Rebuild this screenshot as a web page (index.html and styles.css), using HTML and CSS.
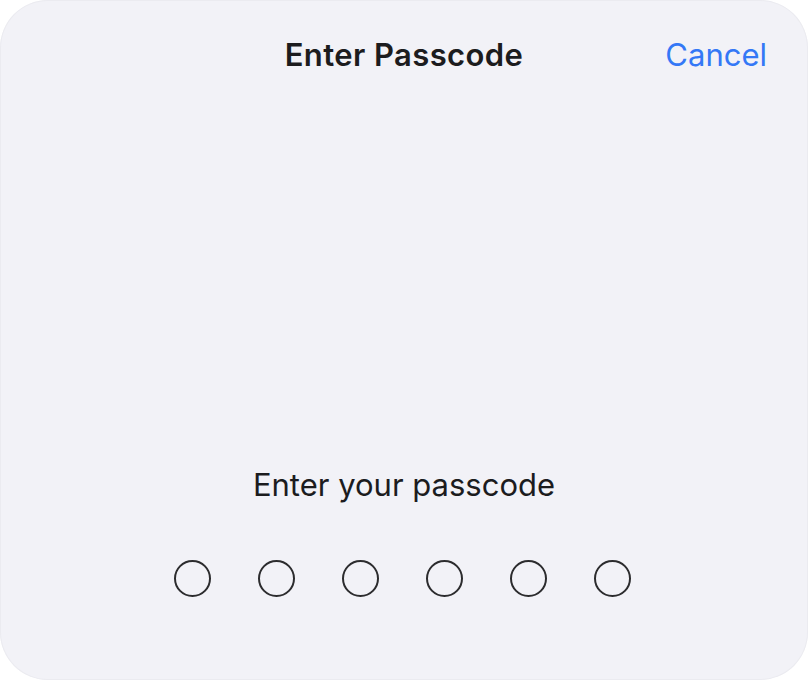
FILE: index.html
```html
<!DOCTYPE html>
<html lang="en">
<head>
<meta charset="utf-8">
<title>Enter Passcode</title>
<link rel="stylesheet" href="styles.css">
</head>
<body>
<div class="sheet">
  <header class="nav">
    <span class="nav-spacer"></span>
    <h1 class="nav-title">Enter Passcode</h1>
    <button class="nav-cancel" type="button">Cancel</button>
  </header>
  <main class="content">
    <p class="prompt">Enter your passcode</p>
    <div class="dots">
      <span class="dot"></span>
      <span class="dot"></span>
      <span class="dot"></span>
      <span class="dot"></span>
      <span class="dot"></span>
      <span class="dot"></span>
    </div>
  </main>
</div>
</body>
</html>
```
FILE: styles.css
```css
* { box-sizing: border-box; }
html, body {
  margin: 0;
  padding: 0;
  background: #ffffff;
}
body {
  font-family: Inter, "Noto Sans", "Liberation Sans", sans-serif;
  color: #1c1c1e;
}
.sheet {
  width: 808px;
  height: 680px;
  background: #f2f2f7;
  border-radius: 48px;
  box-shadow: inset 0 0 0 1px #ebebf0;
  display: flex;
  flex-direction: column;
  overflow: hidden;
}
.nav {
  height: 108px;
  display: grid;
  grid-template-columns: 1fr auto 1fr;
  align-items: center;
  padding: 0 41px;
}
.nav-title {
  margin: 0;
  font-size: 31px;
  font-weight: 600;
  letter-spacing: 0.4px;
  color: #1c1c1e;
}
.nav-cancel {
  justify-self: end;
  border: 0;
  background: none;
  padding: 0;
  font-family: inherit;
  font-size: 31px;
  font-weight: 400;
  color: #3478f6;
}
.content {
  flex: 1;
  display: flex;
  flex-direction: column;
  align-items: center;
  justify-content: flex-end;
  padding-bottom: 83px;
}
.prompt {
  margin: 0;
  font-size: 31px;
  line-height: 36px;
  font-weight: 400;
}
.dots {
  display: flex;
  gap: 47px;
  margin-top: 57px;
  margin-right: 3px;
}
.dot {
  width: 37px;
  height: 37px;
  border: 2px solid #2c2c2e;
  border-radius: 50%;
}
```
